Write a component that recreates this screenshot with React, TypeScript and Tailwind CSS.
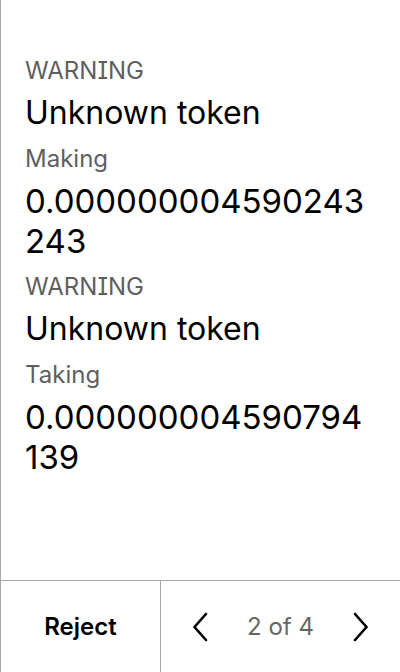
import React from "react";

function Item({ label, value, numeric }: { label: string; value: string; numeric?: boolean }) {
  return (
    <div className="flex flex-col">
      <div className="text-[24px] leading-[28px] text-[#5f5f5f]">{label}</div>
      <div
        className={
          numeric
            ? "mt-2 text-[33px] leading-[40px] text-black break-all"
            : "mt-2 text-[32px] leading-[40px] text-black break-all"
        }
      >
        {value}
      </div>
    </div>
  );
}

export default function App() {
  return (
    <div
      className="w-[400px] h-[672px] bg-white border-l border-[#a8a8a8] flex flex-col"
      style={{ fontFamily: "Inter, sans-serif", fontFeatureSettings: '"cv08"' }}
    >
      <div className="flex-1 flex flex-col gap-3 pt-[57px] pl-6 pr-[30px]">
        <Item label="WARNING" value="Unknown token" />
        <Item label="Making" value="0.000000004590243243" numeric />
        <Item label="WARNING" value="Unknown token" />
        <Item label="Taking" value="0.000000004590794139" numeric />
      </div>
      <div className="h-[92px] border-t border-[#a8a8a8] flex">
        <button className="w-[159px] flex items-center justify-center text-[24px] font-semibold text-black">
          Reject
        </button>
        <div className="flex-1 border-l border-[#a8a8a8] flex items-center justify-between pl-[31px] pr-[31px]">
          <svg width="16" height="30" viewBox="0 0 16 30" fill="none" stroke="black" strokeWidth="2.6" strokeLinecap="round" strokeLinejoin="miter">
            <path d="M14 2 L2.5 15 L14 28" />
          </svg>
          <span className="text-[24px] text-[#666666]">2 of 4</span>
          <svg width="16" height="30" viewBox="0 0 16 30" fill="none" stroke="black" strokeWidth="2.6" strokeLinecap="round" strokeLinejoin="miter">
            <path d="M2 2 L13.5 15 L2 28" />
          </svg>
        </div>
      </div>
    </div>
  );
}
